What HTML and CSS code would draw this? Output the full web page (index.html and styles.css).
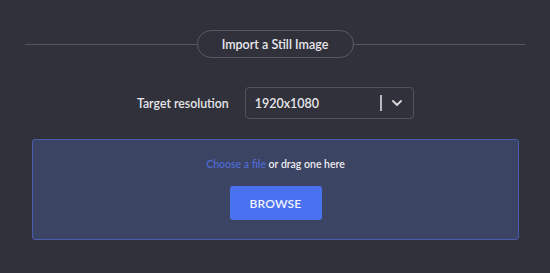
FILE: index.html
```html
<!DOCTYPE html>
<html>
<head>
<meta charset="utf-8">
<link rel="stylesheet" href="styles.css">
</head>
<body>
<div class="page">
  <div class="title-row">
    <div class="rule"></div>
    <div class="pill">Import a Still Image</div>
    <div class="rule"></div>
  </div>
  <div class="res-row">
    <span class="res-label">Target resolution</span>
    <div class="select">
      <span class="select-value">1920x1080</span>
      <span class="select-divider"></span>
      <svg class="chevron" width="10" height="6" viewBox="0 0 10 6"><path d="M1 1 L5 5 L9 1" fill="none" stroke="#d8d8dc" stroke-width="1.8" stroke-linecap="round" stroke-linejoin="round"/></svg>
    </div>
  </div>
  <div class="drop">
    <div class="drop-text"><span class="link">Choose a file</span> or drag one here</div>
    <div class="browse">BROWSE</div>
  </div>
</div>
</body>
</html>
```
FILE: styles.css
```css
html, body {
  margin: 0;
  padding: 0;
  background: #31313b;
}
body {
  width: 550px;
  height: 273px;
  overflow: hidden;
  font-family: "Lato", "Open Sans", sans-serif;
  color: #e6e6ea;
}
.page {
  padding-top: 30px;
}
.title-row {
  display: flex;
  align-items: center;
  margin: 0 25px;
}
.rule {
  flex: 1;
  height: 1px;
  background: #55555f;
}
.pill {
  width: 155px;
  height: 26px;
  border: 1px solid #5a5a66;
  border-radius: 14px;
  display: flex;
  align-items: center;
  justify-content: center;
  font-size: 12.5px;
  font-weight: 600;
  color: #e8e8ec;
}
.res-row {
  display: flex;
  align-items: center;
  margin-top: 29px;
  padding-left: 137px;
  gap: 16px;
}
.res-label {
  font-size: 12.3px;
  font-weight: 600;
  color: #e6e6ea;
}
.select {
  width: 169px;
  height: 32px;
  border: 1px solid #53535d;
  border-radius: 4px;
  display: flex;
  align-items: center;
  box-sizing: border-box;
  padding-left: 9px;
}
.select-value {
  flex: 1;
  font-size: 12.5px;
  font-weight: 600;
  color: #e8e8ec;
}
.select-divider {
  width: 2px;
  height: 16px;
  background: #b8b8c0;
  margin-right: 10px;
}
.chevron {
  margin-right: 11px;
}
.drop {
  margin: 20px 0 0 32px;
  width: 487px;
  height: 101px;
  box-sizing: border-box;
  background: #3c4464;
  border: 1px solid #4a5cae;
  border-radius: 3px;
  display: flex;
  flex-direction: column;
  align-items: center;
  padding-top: 18px;
}
.drop-text {
  font-size: 10.5px;
  font-weight: 600;
  color: #ececf0;
}
.link {
  color: #4e6ad0;
}
.browse {
  margin-top: 16px;
  width: 92px;
  height: 34px;
  background: #4a72f0;
  border-radius: 3px;
  display: flex;
  align-items: center;
  justify-content: center;
  font-size: 12px;
  font-weight: 600;
  color: #f2f4ff;
  letter-spacing: 0.2px;
}
```
